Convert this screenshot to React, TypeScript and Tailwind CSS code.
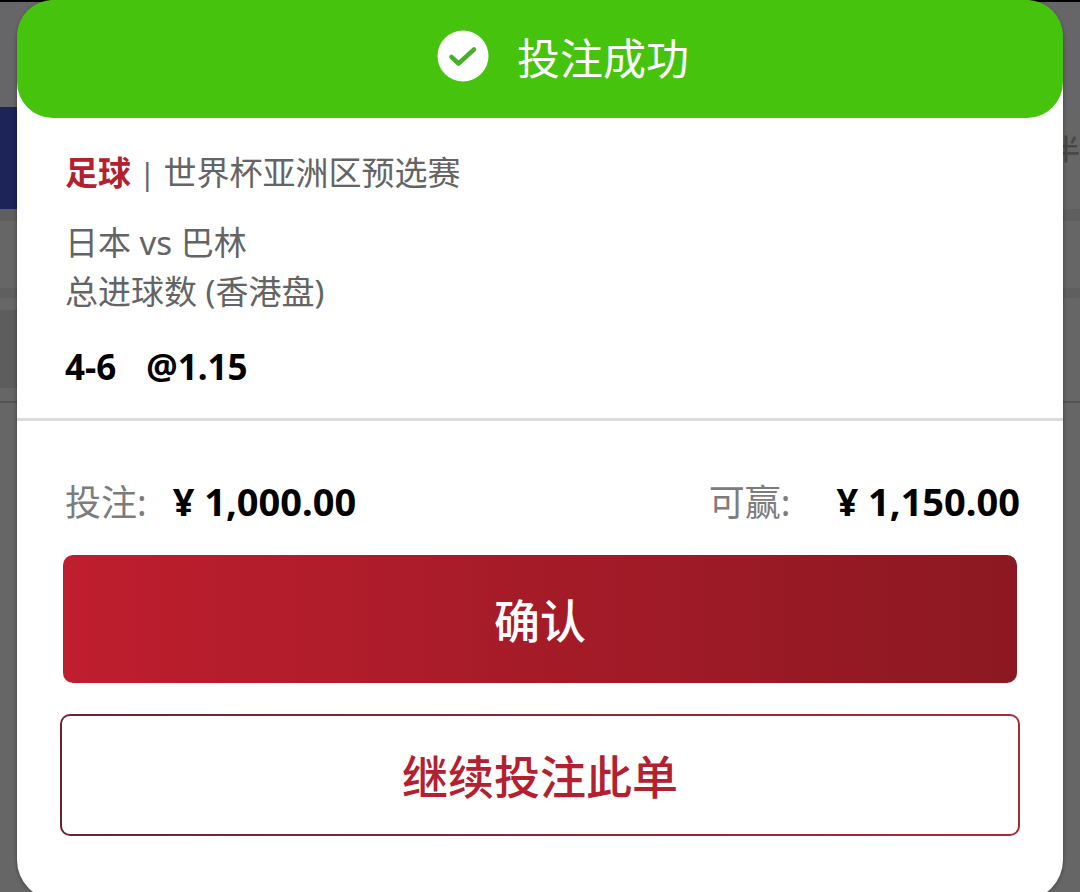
type Bet = {
  sport: string;
  league: string;
  match: string;
  market: string;
  pick: string;
  odds: string;
  stake: string;
  payout: string;
};

const bet: Bet = {
  sport: "足球",
  league: "世界杯亚洲区预选赛",
  match: "日本 vs 巴林",
  market: "总进球数 (香港盘)",
  pick: "4-6",
  odds: "@1.15",
  stake: "¥ 1,000.00",
  payout: "¥ 1,150.00",
};

function SuccessIcon() {
  return (
    <svg viewBox="0 0 52 52" className="size-[52px]" aria-hidden="true">
      <circle cx="26" cy="26" r="25.5" fill="#fff" />
      <path
        d="M14.5 27 L21.5 33.5 L37 19.5"
        fill="none"
        stroke="#46b02a"
        strokeWidth="4.5"
        strokeLinecap="round"
        strokeLinejoin="round"
      />
    </svg>
  );
}

/* Dimmed match list that stays visible at both sides of the dialog */
function Backdrop() {
  return (
    <div className="absolute inset-0 flex flex-col bg-[#666666]" aria-hidden="true">
      <div className="h-[2px] bg-black"></div>
      <div className="h-[105px] bg-[#666568]"></div>
      <div className="flex h-[102px] items-start justify-between">
        <div className="h-full w-1/2 bg-[#1d2458]"></div>
        <span className="pt-7 text-[28px] leading-7 font-medium text-[#484848]">半</span>
      </div>
      <div className="h-3 bg-[#5f5f5f]"></div>
      <div className="h-[67px]"></div>
      <div className="h-2.5 bg-[#5f5f5f]"></div>
      <div className="h-3"></div>
      <div className="flex h-[78px]">
        <div className="w-1/2 bg-[#5d5d5d]"></div>
      </div>
      <div className="h-[13px]"></div>
      <div className="h-[2px] bg-[#555555]"></div>
    </div>
  );
}

function BetDetails({ bet }: { bet: Bet }) {
  return (
    <section className="border-b-3 border-[#dcdcdc] px-12 pt-[30px] pb-[27px] text-[33px] leading-[49px] text-[#646464]">
      <h2>
        <span className="font-bold text-[#b3202f]">{bet.sport}</span>
        <span className="px-2 text-[30px]">|</span>
        {bet.league}
      </h2>
      <p className="mt-5">{bet.match}</p>
      <p>{bet.market}</p>
      <p className="mt-[26px] flex gap-[30px] text-[35px] font-bold text-black">
        <span>{bet.pick}</span>
        <span>{bet.odds}</span>
      </p>
    </section>
  );
}

function Amounts({ bet }: { bet: Bet }) {
  return (
    <dl className="flex justify-between pr-[43px] pl-12 text-[36px] leading-[50px]">
      <div className="flex items-baseline gap-[26px]">
        <dt className="text-[#7c7c7c]">投注:</dt>
        <dd className="text-[38px] font-bold text-black">{bet.stake}</dd>
      </div>
      <div className="flex items-baseline gap-[46px]">
        <dt className="text-[#7c7c7c]">可赢:</dt>
        <dd className="text-[38px] font-bold text-black">{bet.payout}</dd>
      </div>
    </dl>
  );
}

export default function App() {
  return (
    <div className="relative h-screen overflow-hidden font-['Noto_Sans','Noto_Sans_CJK_SC',sans-serif]" lang="zh-CN">
      <Backdrop />

      <div
        role="dialog"
        aria-labelledby="bet-status"
        className="relative mx-[17px] rounded-[40px] bg-white shadow-[0_0_4px_rgba(0,0,0,0.4)]"
      >
        <header className="flex h-[118px] items-center justify-center gap-7 rounded-[36px] bg-[#46c30c] pb-1.5 pl-[46px] text-white">
          <SuccessIcon />
          <h1 id="bet-status" className="pt-1.5 text-[43px] leading-[60px]">
            投注成功
          </h1>
        </header>

        <BetDetails bet={bet} />

        <div className="pt-[55px] pb-16">
          <Amounts bet={bet} />
          <div className="mt-[27px] px-[46px]">
            <button
              type="button"
              className="h-32 w-full rounded-[10px] bg-linear-to-r from-[#bf1e2e] to-[#8c1822] pt-0.5 text-[46px] font-medium text-white"
            >
              确认
            </button>
          </div>
          <div className="mt-[31px] px-[43px]">
            <button
              type="button"
              className="flex h-[122px] w-full rounded-[10px] bg-linear-to-r from-[#6a2530] to-[#a82a38] p-[2px] text-[46px] font-medium text-[#b3202f]"
            >
              <span className="flex h-full w-full items-center justify-center rounded-lg bg-white pt-0.5">
                继续投注此单
              </span>
            </button>
          </div>
        </div>
      </div>
    </div>
  );
}
